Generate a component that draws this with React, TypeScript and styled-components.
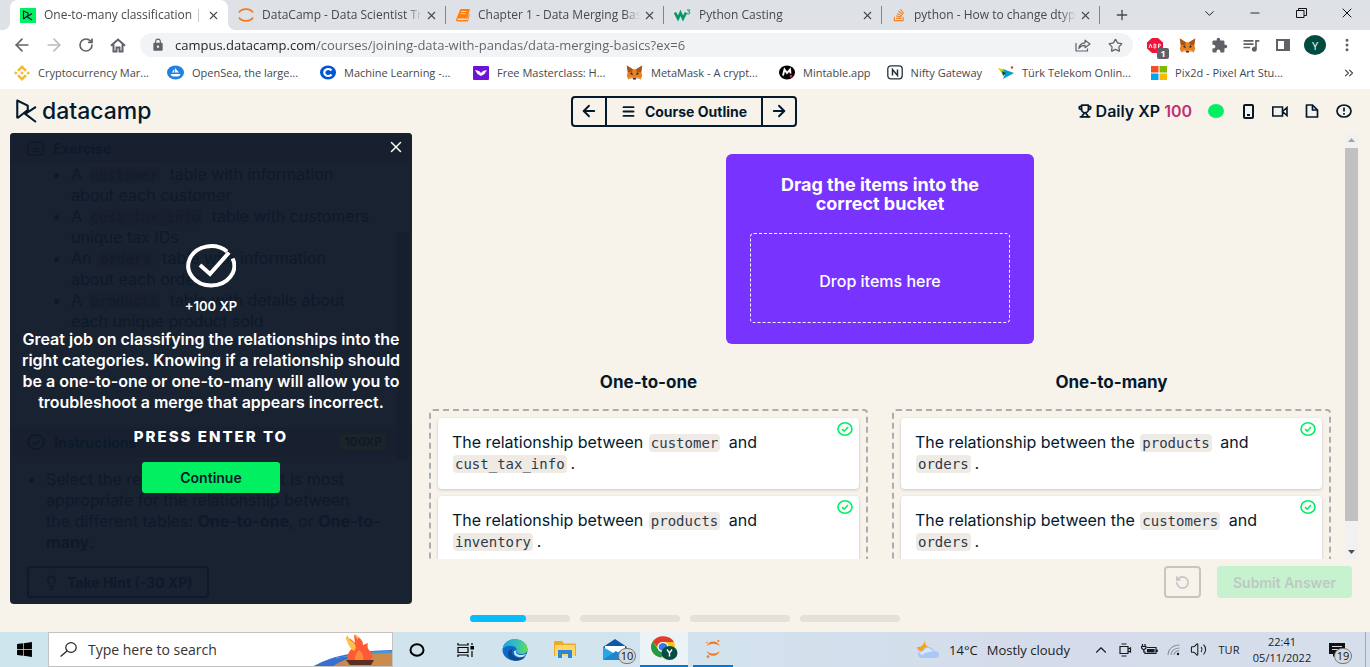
import React from "react";
import styled, { createGlobalStyle } from "styled-components";
import {
  ArrowLeft, ArrowRight, ChevronDown, ChevronUp, ChevronsRight, Menu, Minus, MoreVertical,
  Plus, RotateCw, Star, X, Trophy, RotateCcw, Lightbulb, Volume2,
} from "lucide-react";
import { FaWindows, FaStackOverflow } from "react-icons/fa";
import { MdExtension, MdLock, MdQueueMusic } from "react-icons/md";
import { SiBinance, SiJupyter } from "react-icons/si";

const ui = `"Open Sans", "Noto Sans", sans-serif`;
const brand = `Inter, "Liberation Sans", sans-serif`;
const mono = `"DejaVu Sans Mono", "Liberation Mono", monospace`;
const navy = "#05192d";
const green = "#03ef62";

const GlobalStyle = createGlobalStyle`
  *, *::before, *::after { box-sizing: border-box; }
  body { margin: 0; font-family: ${ui}; }
  button { padding: 0; border: 0; background: none; font: inherit; color: inherit; cursor: pointer; }
  a { color: inherit; text-decoration: none; }
  ul, h1, h2, p { margin: 0; padding: 0; }
  svg { display: block; flex: none; }
`;

const App = styled.div`
  display: flex;
  flex-direction: column;
  height: 100vh;
  overflow: hidden;
`;

/* ---------- browser ---------- */
const TabStrip = styled.div`
  display: flex;
  flex: none;
  height: 30px;
  padding-left: 10px;
  background: #dee1e6;
  color: #45494d;
`;
const Tab = styled.div<{ $active?: boolean }>`
  position: relative;
  display: flex;
  align-items: center;
  flex: 0 1 218px;
  min-width: 0;
  gap: 8px;
  padding: 0 9px 0 10px;
  font-size: 12px;
  background: ${(p) => (p.$active ? "#fff" : "transparent")};
  border-radius: 8px 8px 0 0;
  &::before, &::after {
    content: "";
    display: ${(p) => (p.$active ? "block" : "none")};
    position: absolute;
    bottom: 0;
    width: 8px;
    height: 8px;
  }
  &::before { left: -8px; background: radial-gradient(circle at 0 0, transparent 8px, #fff 8px); }
  &::after { right: -8px; background: radial-gradient(circle at 100% 0, transparent 8px, #fff 8px); }
`;
const TabTitle = styled.span`
  flex: 1;
  min-width: 0;
  margin-right: -5px;
  overflow: hidden;
  white-space: nowrap;
  line-height: 18px;
  mask-image: linear-gradient(to right, #000 90%, transparent);
`;
const TabDivider = styled.span`
  position: absolute;
  right: 0;
  top: 6px;
  width: 1px;
  height: 18px;
  background: #808488;
`;
const IconButton = styled.button<{ $w: number }>`
  display: flex;
  align-items: center;
  justify-content: center;
  flex: none;
  width: ${(p) => p.$w}px;
  position: relative;
`;
const WindowButtons = styled.div`
  display: flex;
  height: 26px;
  margin-left: auto;
  color: #111;
`;
const Toolbar = styled.div`
  display: flex;
  align-items: center;
  flex: none;
  height: 30px;
  padding: 0 7px 0 6px;
  background: #fff;
  color: #5f6368;
`;
const AddressBar = styled.div`
  display: flex;
  align-items: center;
  flex: 1;
  min-width: 0;
  height: 24px;
  margin: 0 6px;
  padding: 0 7px 0 11px;
  gap: 10px;
  border-radius: 12px;
  background: #f1f3f4;
`;
/* the host name is dark and the path after it is grey */
const Address = styled.input`
  flex: 1;
  min-width: 0;
  padding: 0;
  border: 0;
  outline: 0;
  background: linear-gradient(to right, #202124 141px, #5f6368 141px);
  background-clip: text;
  -webkit-background-clip: text;
  color: transparent;
  caret-color: #202124;
  font: 13px/20px ${ui};
`;
const Avatar = styled.span`
  display: grid;
  place-items: center;
  width: 22px;
  height: 20px;
  border-radius: 50%;
  background: #004d40;
  color: #fff;
  font-size: 11px;
`;
const BlockCount = styled.span`
  position: absolute;
  left: 18px;
  top: 10px;
  width: 12px;
  height: 11px;
  border-radius: 2px;
  background: #5f6368;
  color: #fff;
  font-size: 9px;
  font-weight: 700;
  line-height: 11px;
  text-align: center;
`;
const Bookmarks = styled.nav`
  display: flex;
  align-items: center;
  flex: none;
  height: 29px;
  padding: 0 14px 4px;
  gap: 16px;
  background: #fff;
  color: #45494d;
  font-size: 11px;
  line-height: 18px;
  white-space: nowrap;
`;
const Bookmark = styled.a<{ $short?: boolean }>`
  display: flex;
  align-items: center;
  gap: 8px;
  flex: none;
  width: ${(p) => (p.$short ? "auto" : "137px")};
`;
const More = styled.button`
  margin-left: auto;
`;

/* ---------- course page ---------- */
const Page = styled.main`
  display: flex;
  flex-direction: column;
  flex: 1;
  min-height: 0;
  background: #f7f3eb;
  color: ${navy};
  font-family: ${brand};
`;
const Header = styled.header`
  display: grid;
  grid-template-columns: 1fr auto 1fr;
  align-items: center;
  flex: none;
  height: 44px;
  padding: 0 18px 0 16px;
`;
const Logo = styled.a`
  display: flex;
  align-items: center;
  gap: 5px;
  font-size: 23px;
  font-weight: 500;
  line-height: 28px;
`;
const OutlineNav = styled.div`
  display: flex;
  height: 31px;
  border: 2px solid ${navy};
  border-radius: 4px;
  font-size: 14px;
  font-weight: 700;
`;
const OutlineButton = styled.button`
  display: flex;
  align-items: center;
  gap: 9px;
  padding: 0 14px;
  border-left: 2px solid ${navy};
  border-right: 2px solid ${navy};
`;
const Status = styled.div`
  display: flex;
  align-items: center;
  justify-content: flex-end;
  gap: 16px;
`;
const DailyXp = styled.div`
  display: flex;
  align-items: center;
  gap: 4px;
  font-size: 16px;
  font-weight: 600;
`;
const Points = styled.span`
  color: #be2f72;
`;
const Dot = styled.span`
  width: 16px;
  height: 14px;
  border-radius: 50%;
  background: ${green};
`;
const Body = styled.div`
  display: flex;
  flex: 1;
  min-height: 0;
  padding: 0 12px 0 10px;
`;

const Panel = styled.section`
  position: relative;
  display: flex;
  flex-direction: column;
  flex: 0 1 402px;
  min-width: 0;
  overflow: hidden;
  border-radius: 4px;
  background: #192230;
  color: #0c1a2b;
  font-size: 16px;
  line-height: 21px;
`;
const PanelHeader = styled.h2`
  display: flex;
  align-items: center;
  gap: 9px;
  flex: none;
  height: 30px;
  padding: 0 26px 0 17px;
  background: #18202f;
  font-size: 14px;
  font-weight: 700;
`;
const XpTag = styled.span`
  margin-left: auto;
  padding: 0 4px;
  border-radius: 3px;
  background: #1c2429;
  font-size: 12px;
  line-height: 16px;
`;
const TableList = styled.ul`
  flex: 1;
  min-height: 0;
  overflow: hidden;
  padding: 1px 0 0 61px;
  white-space: nowrap;
`;
const TaskList = styled.ul`
  flex: none;
  padding: 12px 0 13px 36px;
  white-space: nowrap;
`;
const DimCode = styled.code`
  margin: 0 5px 0 2px;
  padding: 0 2px;
  border-radius: 3px;
  background: #18202f;
  color: #101c2c;
  font: 14px/18px ${mono};
`;
const DimScrollbar = styled.div`
  position: absolute;
  top: 99px;
  right: 3px;
  bottom: 144px;
  width: 13px;
  background: #161f2e;
`;
const HintButton = styled.button`
  display: flex;
  align-items: center;
  align-self: flex-start;
  gap: 8px;
  height: 32px;
  margin: 0 0 6px 17px;
  padding: 0 14px 0 15px;
  border: 2px solid #0c1a2b;
  border-radius: 4px;
  font-size: 14px;
  font-weight: 700;
`;
const Overlay = styled.div`
  position: absolute;
  inset: 0;
  display: flex;
  flex-direction: column;
  align-items: center;
  justify-content: center;
  padding: 0 8px;
  color: #fff;
  text-align: center;
`;
const CloseButton = styled.button`
  position: absolute;
  top: 5px;
  right: 7px;
`;
const Earned = styled.p`
  margin: 9px 0 14px;
  font-size: 13px;
  font-weight: 600;
  line-height: 18px;
`;
const Praise = styled.p`
  font-size: 16px;
  font-weight: 600;
  line-height: 21px;
  white-space: nowrap;
`;
const PressEnter = styled.p`
  margin: 14px 0 15px;
  font-size: 15px;
  font-weight: 800;
  letter-spacing: 2px;
  line-height: 20px;
`;
const ContinueButton = styled.button`
  width: 138px;
  height: 31px;
  border-radius: 3px;
  background: ${green};
  color: ${navy};
  font-size: 14px;
  font-weight: 600;
`;

const Workspace = styled.section`
  display: flex;
  flex-direction: column;
  flex: 1;
  min-width: 0;
`;
const ScrollArea = styled.div`
  display: flex;
  flex: 1;
  min-height: 0;
  overflow: hidden;
`;
const ScrollContent = styled.div`
  flex: 1;
  min-width: 0;
  padding: 21px 14px 0 17px;
`;
const ScrollTrack = styled.div`
  display: flex;
  flex-direction: column;
  align-items: center;
  justify-content: space-between;
  flex: 0 0 13px;
  padding: 5px 0;
  background: #f1f1f1;
`;
const ScrollThumb = styled.div`
  flex: 1;
  width: 13px;
  margin: 6px 0 29px;
  background: #c1c1c1;
`;
const Source = styled.div`
  width: 308px;
  margin: 0 auto 28px;
  padding: 21px 24px;
  border-radius: 6px;
  background: #7933ff;
  color: #fff;
  text-align: center;
`;
const SourceTitle = styled.h1`
  margin-bottom: 20px;
  font-size: 18px;
  font-weight: 700;
  line-height: 19px;
`;
const DropZone = styled.div`
  display: grid;
  place-items: center;
  height: 90px;
  padding-top: 5px;
  border: 1px dashed #fff;
  border-radius: 4px;
  font-size: 16px;
  font-weight: 500;
`;
const Buckets = styled.div`
  display: grid;
  grid-template-columns: 1fr 1fr;
  gap: 24px;
`;
const BucketTitle = styled.h2`
  margin-bottom: 17px;
  font-size: 17px;
  font-weight: 700;
  line-height: 20px;
  text-align: center;
`;
const BucketBox = styled.div`
  display: grid;
  gap: 7px;
  padding: 7px;
  border: 2px dashed #abaeb0;
  border-radius: 4px;
`;
const Card = styled.div`
  position: relative;
  padding: 14px 40px 15px 14px;
  border-radius: 4px;
  background: #fff;
  box-shadow: 0 1px 3px rgba(5, 25, 45, 0.2);
  font-size: 16px;
  line-height: 21px;
`;
const Code = styled.code`
  display: inline-block;
  margin: 0 4px 0 1px;
  padding: 0 2px;
  border-radius: 4px;
  background: #efeae4;
  color: #2b3b4c;
  font: 14px/18px ${mono};
`;
const CardMark = styled.span`
  position: absolute;
  top: 4px;
  right: 6px;
`;
const Actions = styled.div`
  display: flex;
  justify-content: flex-end;
  gap: 16px;
  flex: none;
  padding: 7px 6px 6px;
`;
const ResetButton = styled.button`
  display: grid;
  place-items: center;
  width: 37px;
  height: 32px;
  border: 2px solid #c8c5c0;
  border-radius: 4px;
  color: #c4c4c4;
`;
const SubmitButton = styled.button`
  width: 135px;
  height: 32px;
  border-radius: 4px;
  background: #c6f2d0;
  color: #bfc8c1;
  font-size: 14px;
  font-weight: 600;
`;
const Progress = styled.div`
  display: flex;
  justify-content: center;
  align-items: center;
  gap: 10px;
  flex: none;
  height: 28px;
`;
const Step = styled.div`
  width: 100px;
  height: 7px;
  border-radius: 4px;
  background: #e5e0d9;
`;
const StepFill = styled.div`
  height: 7px;
  border-radius: 4px;
  background: #06bdfc;
`;

/* ---------- taskbar ---------- */
const Taskbar = styled.footer`
  display: flex;
  align-items: stretch;
  flex: none;
  height: 35px;
  background: linear-gradient(to right, #cde5ec, #d2e3ee 50%, #d5dbea 78%, #d5dfeb);
  color: #1b1b1b;
`;
const SearchBox = styled.label`
  display: flex;
  align-items: center;
  gap: 11px;
  width: 345px;
  padding-left: 11px;
  border: 1px solid #c3c3c3;
  background: #fff;
  overflow: hidden;
`;
const SearchInput = styled.input`
  flex: 1;
  min-width: 0;
  padding: 0;
  border: 0;
  outline: 0;
  background: none;
  font: 14px/20px ${ui};
  &::placeholder { color: #333; opacity: 1; }
`;
const TaskButton = styled.button<{ $w: number; $current?: boolean; $open?: boolean }>`
  position: relative;
  display: grid;
  place-items: center;
  align-self: stretch;
  width: ${(p) => p.$w}px;
  margin-left: ${(p) => (p.$open && !p.$current ? 5 : 0)}px;
  background: ${(p) => (p.$current ? "#ecf3f7" : "transparent")};
  border-bottom: ${(p) => (p.$open ? "2px solid #0078d7" : "0")};
`;
const Count = styled.span<{ $x: number }>`
  position: absolute;
  left: ${(p) => p.$x}px;
  top: 16px;
  min-width: 18px;
  height: 16px;
  border: 1px solid #777;
  border-radius: 8px;
  background: #d3d9dc;
  color: #111;
  font-size: 11px;
  line-height: 14px;
  text-align: center;
`;
const Tray = styled.div`
  display: flex;
  align-items: center;
  margin-left: auto;
  padding-right: 4px;
`;
const Weather = styled.button`
  display: flex;
  align-items: center;
  gap: 9px;
  margin-right: 19px;
  font-size: 13px;
`;
const Language = styled.button`
  width: 38px;
  font-size: 11px;
`;
const Clock = styled.div`
  width: 68px;
  font-size: 11px;
  line-height: 16px;
  text-align: center;
`;
const DesktopEdge = styled.span`
  align-self: stretch;
  width: 1px;
  margin-left: 7px;
  background: #9fa8b3;
`;

/* ---------- drawings ---------- */
const DcMark = () => (
  <svg width="21" height="24" viewBox="0 0 20 23" fill="none" stroke={navy} strokeWidth="2" strokeLinejoin="round" preserveAspectRatio="none">
    <path d="M1.200 18.500V1.500l10 4.800v4.200L1.200 18.500M19 7.500 8.800 14.200 19 22M11.200 10.500v2" />
  </svg>
);
const DcTab = () => (
  <svg width="16" height="15" viewBox="0 0 16 15">
    <rect width="16" height="15" fill={green} />
    <path d="M3.500 11V3l4.500 2v2.500L3.500 11M12 5.500 7 8.800l5 3.200" fill="none" stroke={navy} strokeWidth="1.100" />
  </svg>
);
const NotebookArcs = () => (
  <svg width="16" height="16" viewBox="0 0 16 16" fill="none" stroke="#f37726" strokeWidth="1.600">
    <path d="M1 5.500C3.500 1 12.500 1 15 5.500M1 10.500c2.500 4.500 11.500 4.500 14 0" />
  </svg>
);
const Book = () => (
  <svg width="14" height="14" viewBox="0 0 16 16">
    <path d="M5 1h10q1 0 .7 1L13 12H2.500q-1 0-1 1t1 .8H13l2-7 .8.500-2 7.200q-.3 1-1.300 1H2q-2 0-2-2z" fill="#ff7f0e" />
    <path d="M6 4h6M5.400 6.500h6" stroke="#dee1e6" strokeWidth="1" />
  </svg>
);
const W3 = () => (
  <svg width="17" height="16" viewBox="0 0 17 16" fill="none" stroke="#059862">
    <path d="M1 5.500 4 11.500 6.500 6l2.500 5.500 3-6" strokeWidth="2.600" />
    <path d="M13 3h3l-1.500 1.800q2 .2 1.200 1.700-1 1-2.700.2" strokeWidth="1" />
  </svg>
);
const Fox = () => (
  <svg width="17" height="15" viewBox="0 0 32 29">
    <path d="M1 1l12 7h6l12-7-2 12 2 8-3 7-8-3-2 3h-4l-2-3-8 3-3-7 2-8z" fill="#e8821e" />
    <path d="M1 1l12 7-2 6-8 0zM31 1 19 8l2 6h8z" fill="#a8561d" />
    <path d="M11 14l-4 3 6 3zM21 14l4 3-6 3zM13 25h6l-1 3h-4z" fill="#26323f" />
    <path d="M4 26l7-3 2 2-1 2zM28 26l-7-3-2 2 1 2z" fill="#d5bfb2" />
  </svg>
);
const HouseLine = () => (
  <svg width="16" height="15" viewBox="0 0 16 15" fill="none" stroke="#5f6368" strokeWidth="2">
    <path d="M1 7.800 8 1.500l7 6.300M3.500 6.500V13.500h3V9.500h3v4h3V6.500" />
  </svg>
);
const ShareArrow = () => (
  <svg width="16" height="13" viewBox="0 0 16 13" fill="none" stroke="#5f6368" strokeWidth="1.200" strokeLinejoin="round">
    <path d="M1 4v8h11.500v-2.500" />
    <path d="M3.800 9.500Q4.500 4 10 3.800V1.200L15 5l-5 3.700V6.300Q6 6.200 3.800 9.500z" />
  </svg>
);
const Magnifier = () => (
  <svg width="17" height="15" viewBox="0 0 17 15" fill="none" stroke="#222" strokeWidth="1.200">
    <ellipse cx="11" cy="5.500" rx="5.200" ry="4.800" /><path d="M7 9 .6 14.500" />
  </svg>
);
const Check = ({ w, h, color, sw }: { w: number; h: number; color: string; sw: number }) => (
  <svg width={w} height={h} viewBox="0 0 16 14" fill="none" stroke={color} strokeWidth={sw} preserveAspectRatio="none">
    <ellipse cx="8" cy="7" rx="7" ry="6.200" />
    <path d="M5 7.200l2.200 2L11 5" />
  </svg>
);
const BigCheck = () => (
  <svg width="50" height="44" viewBox="0 0 50 44" fill="none" stroke="#fff" strokeWidth="4">
    <path d="M41 7.500A23 19.700 0 1 0 46.600 14.500" />
    <path d="M14 21l10 9L43 8.500" />
  </svg>
);
const OpenSea = () => (
  <svg width="17" height="15" viewBox="0 0 17 15">
    <ellipse cx="8.500" cy="7.500" rx="8.500" ry="7" fill="#2081e2" />
    <path d="M8 3l4 4.500H8zM7.300 4v3.500H4.800zM3.500 9h10q-.5 2.500-3 2.500h-4q-2.500 0-3-2.500z" fill="#fff" />
  </svg>
);
const Coursera = () => (
  <svg width="16" height="15" viewBox="0 0 16 15">
    <ellipse cx="8" cy="7.500" rx="8" ry="7" fill="#0056d2" />
    <path d="M11.500 5.500a4 3.400 0 1 0 0 4" fill="none" stroke="#fff" strokeWidth="2.200" />
  </svg>
);
const Masterclass = () => (
  <svg width="16" height="14" viewBox="0 0 16 14">
    <rect width="16" height="14" rx="1" fill="#6d12d6" />
    <path d="M2 4l4 1 2 2 2-2 4-1-2.500 4L8 10 4.500 8z" fill="#fff" />
  </svg>
);
const Mintable = () => (
  <svg width="16" height="15" viewBox="0 0 16 15">
    <ellipse cx="8" cy="7.500" rx="8" ry="7" fill="#000" />
    <path d="M4 10.500l1.500-6L8 8l3-3.500.5 4" fill="none" stroke="#fff" strokeWidth="1.900" />
    <circle cx="12" cy="11" r="1.500" fill="#d0213f" />
  </svg>
);
const Nifty = () => (
  <svg width="16" height="15" viewBox="0 0 16 15" fill="none" stroke="#26323a">
    <rect x=".8" y=".8" width="14.400" height="13" rx="3" strokeWidth="1.300" />
    <path d="M5.500 10.500V4.500l5 6v-6" strokeWidth="1.500" />
  </svg>
);
const Telekom = () => (
  <svg width="16" height="14" viewBox="0 0 16 14">
    <path d="M0 2l8 2-3 5z" fill="#c8d400" />
    <path d="M5 3l11 4-11 6 2-5z" fill="#00a3c4" />
    <path d="M4 5l4 2-3 3z" fill="#14375f" />
    <circle cx="14" cy="1.500" r="1.200" fill="#e5342b" />
  </svg>
);
const Squares = () => (
  <svg width="16" height="14" viewBox="0 0 16 14">
    <path fill="#f25022" d="M0 0h7.500v6.500H0z" /><path fill="#7fba00" d="M8.500 0H16v6.500H8.500z" />
    <path fill="#00a4ef" d="M0 7.500h7.500V14H0z" /><path fill="#ffb900" d="M8.500 7.500H16V14H8.500z" />
  </svg>
);
const AdBlock = () => (
  <svg width="16" height="15" viewBox="0 0 16 15">
    <path d="M5 0h6l5 4.500v6L11 15H5l-5-4.500v-6z" fill="#f0143c" />
    <path d="M2 10l1.500-4L5 10M7 6v4h1.500q1.200-1 0-2 1-1.300-.2-2H7M11.500 10V6h1.200q1.600 1 0 2.300h-1" fill="none" stroke="#fff" strokeWidth=".9" />
  </svg>
);
const SidePanel = () => (
  <svg width="14" height="12" viewBox="0 0 14 12">
    <rect x="1" y="1" width="12" height="10" fill="none" stroke="#5f6368" strokeWidth="2" />
    <path d="M8 1h5v10H8z" fill="#5f6368" />
  </svg>
);
const Restore = () => (
  <svg width="11" height="10" viewBox="0 0 11 10" fill="none" stroke="#111">
    <path d="M.5 2.500h7.500v7H.5zM2.500 2.500V.5h8v7H8" />
  </svg>
);
const Phone = () => (
  <svg width="11" height="15" viewBox="0 0 11 15" fill="none" stroke={navy} strokeWidth="2">
    <rect x="1" y="1" width="9" height="13" rx="1" /><path d="M4 11h3" />
  </svg>
);
const VideoCam = () => (
  <svg width="16" height="11" viewBox="0 0 16 11" fill="none" stroke={navy} strokeWidth="1.600">
    <path d="M.8 1h9.700v9H.8zM10.500 5.500 15 1.500v8z" />
  </svg>
);
const FileSheet = () => (
  <svg width="14" height="14" viewBox="0 0 14 14" fill="none" stroke={navy} strokeWidth="1.700" strokeLinejoin="round">
    <path d="M1.500 1h6L12.500 6v7h-11zM7.500 1v5h5" />
  </svg>
);
const Alert = () => (
  <svg width="16" height="14" viewBox="0 0 16 14" fill="none" stroke={navy} strokeWidth="1.700">
    <ellipse cx="8" cy="7" rx="7" ry="6" /><path d="M8 3.500v4M8 9v1.700" />
  </svg>
);
const ExerciseIcon = () => (
  <svg width="17" height="15" viewBox="0 0 17 15" fill="none" stroke="#0c1a2b" strokeWidth="1.500">
    <rect x="1" y="1" width="15" height="13" rx="2" /><path d="M4 10.500h9M5 7.500h7M7.500 4h2" />
  </svg>
);
const Campfire = () => (
  <svg width="80" height="34" viewBox="0 0 80 34">
    <path d="M0 34Q26 18 80 17v17z" fill="#3a6fd0" />
    <path d="M24 26q22-9 56-8v6H24z" fill="#3f9bd8" />
    <path d="M20 34q18-14 60-14v14z" fill="#c98a4b" />
    <path d="M36 28q-2-9 5-13-6-5-7-11 6 2 9 6l-1-8q9 3 9 10l5-2q-2 5 3 9 3 6-1 9z" fill="#ff5a36" />
    <path d="M35 8q-2-4 1-6 0 4 5 7 5 5 1 9-5-3-7-10zM42 1q5 1 4 6z" fill="#ffc247" />
    <path d="M43 28q-1-6 4-11 6 5 4 11z" fill="#ff8a3c" />
    <path d="M34 27h28l-3 5H38z" fill="#5a2f22" />
  </svg>
);
const Ring = () => (
  <svg width="16" height="14" viewBox="0 0 16 14"><ellipse cx="8" cy="7" rx="6.500" ry="5.800" fill="none" stroke="#000" strokeWidth="2" /></svg>
);
const TaskView = () => (
  <svg width="17" height="14" viewBox="0 0 17 14" fill="none" stroke="#000" strokeWidth="1.200">
    <path d="M1 0v2h10V0M1 4.500h10v5H1zM1 14v-2h10v2M15 0v2M15 8v6" /><path d="M14 3.500h2.500v2.500H14z" fill="#000" />
  </svg>
);
const Edge = () => (
  <svg width="26" height="22" viewBox="0 0 26 22">
    <defs><linearGradient id="edgeTop"><stop offset="0" stopColor="#1fa3e0" /><stop offset=".6" stopColor="#35c1b8" /><stop offset="1" stopColor="#66dd4c" /></linearGradient></defs>
    <ellipse cx="13" cy="11" rx="12.500" ry="10.700" fill="#0f6cc4" />
    <path d="M.6 10Q2 .3 13 .3 24.500 1 25.400 9.500q0 5.500-6.500 5.500-5 0-4.400-3 1-3.500-3.500-5Q4.500 5.500.6 10z" fill="url(#edgeTop)" />
    <path d="M11 9.500q-3 4 1 7.500 5 3 11.500.5-4 5-11 4.200Q5 20 6 14q1-4 5-4.500z" fill="#0c4a96" />
    <path d="M14.600 11q-2 3 1.400 4.500 4 1.500 8-.8-2 4-7 3.500-6-1.500-5-6z" fill="#cfe5ec" />
  </svg>
);
const Folder = () => (
  <svg width="22" height="17" viewBox="0 0 22 17">
    <path d="M0 1.500Q0 0 1 0h7l2 2.500h11q1 0 1 1V15H0z" fill="#f2a922" /><path d="M1 4h20v11H1z" fill="#ffd667" />
    <path d="M4 9h14v8h-4v-4H8v4H4z" fill="#2f86d6" />
  </svg>
);
const Mail = () => (
  <svg width="26" height="21" viewBox="0 0 26 21">
    <path d="M1 8 13 0l12 8v4H1z" fill="#0b58ad" /><path d="M3 7h20v8H3z" fill="#fff" />
    <path d="M1 8l12 7 12-7v13H1z" fill="#29a5e6" /><path d="M1 21l13-9 11 9z" fill="#1c86d2" />
  </svg>
);
const Chrome = () => (
  <svg width="28" height="25" viewBox="0 0 28 25">
    <ellipse cx="13" cy="11" rx="12" ry="10.500" fill="#fbc116" />
    <path d="M2.600 5.800A12 10.500 0 0 1 24 6H13q-5 0-5.500 5z" fill="#e33b2e" />
    <path d="M2.600 5.800 8 13q2 4 7 3l-4 5.400A12 10.500 0 0 1 2.600 5.800z" fill="#229a48" />
    <ellipse cx="13" cy="11" rx="5.600" ry="4.900" fill="#fff" /><ellipse cx="13" cy="11" rx="4.400" ry="3.900" fill="#3b78e7" />
    <ellipse cx="19.500" cy="17" rx="8" ry="7" fill="#064e43" />
    <path d="M17 13.500l2.500 3.500 2.500-3.500M19.500 17v3.500" stroke="#fff" strokeWidth="1.400" fill="none" />
  </svg>
);
const Cloud = () => (
  <svg width="24" height="19" viewBox="0 0 24 19">
    <path d="M9 0q-1 6 6 8-2 5-8 4-6-1-6-5 6 1 8-7z" fill="#f5a31f" />
    <path d="M6 18q-4-.5-4-3.500t4-3.500q2-4 6-4t6 4q5 0 5 3.500T19 18z" fill="#a9c8f5" />
    <path d="M6 15q-3-1-1-3 3-1 4-3 4-3 8 3-6-1-11 3z" fill="#d6e6fc" />
  </svg>
);
const MeetNow = () => (
  <svg width="13" height="14" viewBox="0 0 13 14" fill="none" stroke="#1b1b1b" strokeWidth="1.200">
    <path d="M1 3.500h8v7H1zM9 6l2.500-1v4L9 8M2.500 1h5M2.500 13h5" />
  </svg>
);
const Battery = () => (
  <svg width="17" height="12" viewBox="0 0 17 12" fill="none" stroke="#1b1b1b" strokeWidth="1.200">
    <path d="M6 3.500h9v6H4V7.500M16.200 5.500v2.500M1.500 0v2.500M4 0v2.500M.5 2.500h4.500v1.500L3.500 5.500H2L.5 4zM2.800 5.500v3" /><path d="M6.500 5.500H13v2.500H6.500z" fill="#1b1b1b" />
  </svg>
);
const Wifi = () => (
  <svg width="14" height="12" viewBox="0 0 14 12" fill="none" stroke="#8b939b" strokeWidth="1.100">
    <path d="M1 11Q1.500 1.500 12.500 1M4 11q.5-6.500 8.500-7M7 11q.5-4 5.500-4.200" /><circle cx="11" cy="10" r="1.200" fill="#111" stroke="none" />
  </svg>
);
const Note = () => (
  <svg width="17" height="14" viewBox="0 0 17 14"><path d="M0 0h16v11H7l-3 3v-3H0z" fill="#111" /><path d="M3 3.500h10M3 6.500h10" stroke="#d5dbea" strokeWidth="1.200" /></svg>
);
const Triangle = ({ up }: { up?: boolean }) => (
  <svg width="7" height="4" viewBox="0 0 7 4"><path d={up ? "M0 4h7L3.500 0z" : "M0 0h7L3.500 4z"} fill={up ? "#a3a3a3" : "#505050"} /></svg>
);

/* ---------- data ---------- */
const tabs = [
  { title: "One-to-many classification | Python", icon: <DcTab /> },
  { title: "DataCamp - Data Scientist Track", icon: <NotebookArcs /> },
  { title: "Chapter 1 - Data Merging Basics", icon: <Book /> },
  { title: "Python Casting", icon: <W3 /> },
  { title: "python - How to change dtype", icon: <FaStackOverflow size={14} color="#f48024" /> },
];
const bookmarks = [
  { label: "Cryptocurrency Mar...", icon: <SiBinance size={16} color="#f3ba2f" /> },
  { label: "OpenSea, the large...", icon: <OpenSea /> },
  { label: "Machine Learning -...", icon: <Coursera /> },
  { label: "Free Masterclass: H...", icon: <Masterclass /> },
  { label: "MetaMask - A crypt...", icon: <Fox /> },
  { label: "Mintable.app", icon: <Mintable />, short: true },
  { label: "Nifty Gateway", icon: <Nifty />, short: true },
  { label: "Türk Telekom Onlin...", icon: <Telekom /> },
  { label: "Pix2d - Pixel Art Stu...", icon: <Squares /> },
];
const buckets = [
  { title: "One-to-one", lead: "The relationship between", pairs: [["customer", "cust_tax_info"], ["products", "inventory"]] },
  { title: "One-to-many", lead: "The relationship between the", pairs: [["products", "orders"], ["customers", "orders"]] },
];
const steps = [56, 0, 0, 0];

export default function CampusWindow() {
  return (
    <App>
      <GlobalStyle />
      <TabStrip>
        {tabs.map((t, i) => (
          <Tab key={t.title} $active={i === 0}>
            {t.icon}
            <TabTitle>{t.title}</TabTitle>
            <IconButton $w={12} aria-label="Close tab"><X size={13} /></IconButton>
            {i > 0 && <TabDivider />}
          </Tab>
        ))}
        <IconButton $w={44} aria-label="New tab"><Plus size={16} /></IconButton>
        <WindowButtons>
          <IconButton $w={46} aria-label="Search tabs"><ChevronDown size={15} strokeWidth={1.5} /></IconButton>
          <IconButton $w={46} aria-label="Minimize"><Minus size={14} strokeWidth={1.5} /></IconButton>
          <IconButton $w={46} aria-label="Restore"><Restore /></IconButton>
          <IconButton $w={46} aria-label="Close window"><X size={16} strokeWidth={1.5} /></IconButton>
        </WindowButtons>
      </TabStrip>

      <Toolbar>
        <IconButton $w={32} aria-label="Back"><ArrowLeft size={20} /></IconButton>
        <IconButton $w={32} aria-label="Forward"><ArrowRight size={20} color="#babcbe" /></IconButton>
        <IconButton $w={32} aria-label="Reload"><RotateCw size={16} strokeWidth={2.5} /></IconButton>
        <IconButton $w={32} aria-label="Home"><HouseLine /></IconButton>
        <AddressBar>
          <MdLock size={14} />
          <Address aria-label="Address" defaultValue="campus.datacamp.com/courses/joining-data-with-pandas/data-merging-basics?ex=6" />
          <IconButton $w={22} aria-label="Share"><ShareArrow /></IconButton>
          <IconButton $w={22} aria-label="Bookmark"><Star size={15} /></IconButton>
        </AddressBar>
        <IconButton $w={32} aria-label="Ad blocker"><AdBlock /><BlockCount>1</BlockCount></IconButton>
        <IconButton $w={32} aria-label="Wallet"><Fox /></IconButton>
        <IconButton $w={32} aria-label="Extensions"><MdExtension size={17} /></IconButton>
        <IconButton $w={32} aria-label="Media"><MdQueueMusic size={20} /></IconButton>
        <IconButton $w={32} aria-label="Side panel"><SidePanel /></IconButton>
        <IconButton $w={32} aria-label="Profile"><Avatar>Y</Avatar></IconButton>
        <IconButton $w={32} aria-label="Menu"><MoreVertical size={16} strokeWidth={2.5} /></IconButton>
      </Toolbar>

      <Bookmarks>
        {bookmarks.map((b) => (
          <Bookmark key={b.label} href="#" $short={b.short}>{b.icon}{b.label}</Bookmark>
        ))}
        <More aria-label="More bookmarks"><ChevronsRight size={14} /></More>
      </Bookmarks>

      <Page>
        <Header>
          <Logo href="#"><DcMark />datacamp</Logo>
          <OutlineNav>
            <IconButton $w={32} aria-label="Previous"><ArrowLeft size={18} strokeWidth={2.5} /></IconButton>
            <OutlineButton><Menu size={15} strokeWidth={3} />Course Outline</OutlineButton>
            <IconButton $w={32} aria-label="Next"><ArrowRight size={18} strokeWidth={2.5} /></IconButton>
          </OutlineNav>
          <Status>
            <DailyXp><Trophy size={14} strokeWidth={3} />Daily XP <Points>100</Points></DailyXp>
            <Dot />
            <IconButton $w={16} aria-label="Mobile app"><Phone /></IconButton>
            <IconButton $w={16} aria-label="Video"><VideoCam /></IconButton>
            <IconButton $w={16} aria-label="Slides"><FileSheet /></IconButton>
            <IconButton $w={16} aria-label="Report issue"><Alert /></IconButton>
          </Status>
        </Header>

        <Body>
          <Panel>
            <PanelHeader><ExerciseIcon />Exercise</PanelHeader>
            <TableList>
              <li>A <DimCode>customer</DimCode> table with information<br />about each customer</li>
              <li>A <DimCode>cust_tax_info</DimCode> table with customers<br />unique tax IDs</li>
              <li>An <DimCode>orders</DimCode> table with information<br />about each order</li>
              <li>A <DimCode>products</DimCode> table with details about<br />each unique product sold</li>
            </TableList>
            <PanelHeader><Check w={18} h={16} color="#0c1a2b" sw={1.5} />Instructions<XpTag>100XP</XpTag></PanelHeader>
            <TaskList>
              <li>
                Select the relationship type that is most<br />appropriate for the relationship between<br />
                the different tables: <b>One-to-one</b>, or <b>One-to-<br />many</b>.
              </li>
            </TaskList>
            <HintButton><Lightbulb size={15} />Take Hint (-30 XP)</HintButton>
            <DimScrollbar />
            <Overlay>
              <CloseButton aria-label="Close"><X size={18} /></CloseButton>
              <BigCheck />
              <Earned>+100 XP</Earned>
              <Praise>
                Great job on classifying the relationships into the<br />
                right categories. Knowing if a relationship should<br />
                be a one-to-one or one-to-many will allow you to<br />
                troubleshoot a merge that appears incorrect.
              </Praise>
              <PressEnter>PRESS ENTER TO</PressEnter>
              <ContinueButton>Continue</ContinueButton>
            </Overlay>
          </Panel>

          <Workspace>
            <ScrollArea>
              <ScrollContent>
                <Source>
                  <SourceTitle>Drag the items into the<br />correct bucket</SourceTitle>
                  <DropZone>Drop items here</DropZone>
                </Source>
                <Buckets>
                  {buckets.map((b) => (
                    <div key={b.title}>
                      <BucketTitle>{b.title}</BucketTitle>
                      <BucketBox>
                        {b.pairs.map(([a, z]) => (
                          <Card key={a}>
                            {b.lead} <Code>{a}</Code> and<br /><Code>{z}</Code>.
                            <CardMark><Check w={16} h={14} color={green} sw={1.6} /></CardMark>
                          </Card>
                        ))}
                      </BucketBox>
                    </div>
                  ))}
                </Buckets>
              </ScrollContent>
              <ScrollTrack><Triangle up /><ScrollThumb /><Triangle /></ScrollTrack>
            </ScrollArea>
            <Actions>
              <ResetButton aria-label="Reset"><RotateCcw size={15} strokeWidth={2.5} /></ResetButton>
              <SubmitButton disabled>Submit Answer</SubmitButton>
            </Actions>
          </Workspace>
        </Body>
        <Progress>
          {steps.map((done, i) => (
            <Step key={i}>{done > 0 && <StepFill style={{ width: `${done}%` }} />}</Step>
          ))}
        </Progress>
      </Page>

      <Taskbar>
        <TaskButton $w={48} aria-label="Start"><FaWindows size={17} color="#000" /></TaskButton>
        <SearchBox>
          <Magnifier />
          <SearchInput placeholder="Type here to search" aria-label="Search" />
          <Campfire />
        </SearchBox>
        <TaskButton $w={48} aria-label="Cortana"><Ring /></TaskButton>
        <TaskButton $w={49} aria-label="Task view"><TaskView /></TaskButton>
        <TaskButton $w={50} aria-label="Edge"><Edge /></TaskButton>
        <TaskButton $w={50} aria-label="Files"><Folder /></TaskButton>
        <TaskButton $w={50} aria-label="Mail"><Mail /><Count $x={28}>10</Count></TaskButton>
        <TaskButton $w={48} $current $open aria-label="Chrome"><Chrome /></TaskButton>
        <TaskButton $w={40} $open aria-label="Jupyter"><SiJupyter size={18} color="#f37726" /></TaskButton>
        <Tray>
          <Weather><Cloud /><span>14°C</span><span>Mostly cloudy</span></Weather>
          <IconButton $w={24} aria-label="Show hidden icons"><ChevronUp size={18} strokeWidth={1.5} /></IconButton>
          <IconButton $w={24} aria-label="Meet now"><MeetNow /></IconButton>
          <IconButton $w={24} aria-label="Battery"><Battery /></IconButton>
          <IconButton $w={25} aria-label="Network"><Wifi /></IconButton>
          <IconButton $w={24} aria-label="Volume"><Volume2 size={17} strokeWidth={1.5} /></IconButton>
          <Language>TUR</Language>
          <Clock>22:41<br />05/11/2022</Clock>
          <TaskButton $w={42} aria-label="Notifications"><Note /><Count $x={18}>19</Count></TaskButton>
          <DesktopEdge />
        </Tray>
      </Taskbar>
    </App>
  );
}
